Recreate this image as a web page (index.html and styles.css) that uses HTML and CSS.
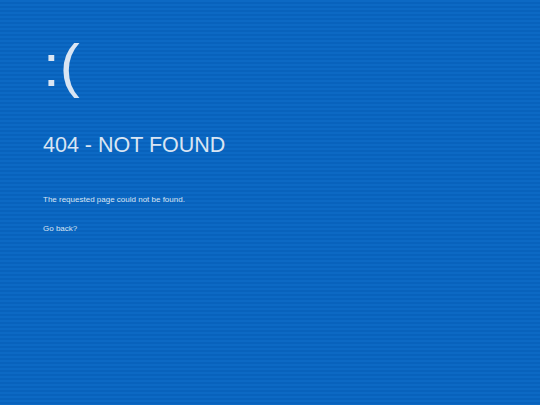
FILE: index.html
```html
<!DOCTYPE html>
<html lang="en">
<head>
  <meta charset="UTF-8" />
  <title>404 - Not Found</title>
  <link rel="stylesheet" href="styles.css">
</head>
<body>

<div class="screen">
  <div class="face">:(</div>
  <h1>404 - NOT FOUND</h1>
  <p>The requested page could not be found.</p>
  <p><a href="#" onclick="history.back(); return false;">Go back?</a></p>
</div>

</body>
</html>
```

FILE: styles.css
```css
html, body {
  margin: 0;
  height: 100%;
}
body {
  font-family: "Liberation Sans", Arial, sans-serif;
  background-color: #0a66c1;
  background-image: repeating-linear-gradient(to bottom, #0c69c4 0, #0c69c4 2px, #0862bc 2px, #0862bc 4px);
  color: #d9e5f3;
}
.screen {
  padding: 31px 43px;
}
.face {
  font-size: 60px;
  line-height: 70px;
}
h1 {
  font-size: 21.5px;
  font-weight: normal;
  margin: 32px 0 37px;
}
p {
  font-size: 8px;
  margin: 0 0 20px;
}
a {
  color: inherit;
  text-decoration: none;
}
```
